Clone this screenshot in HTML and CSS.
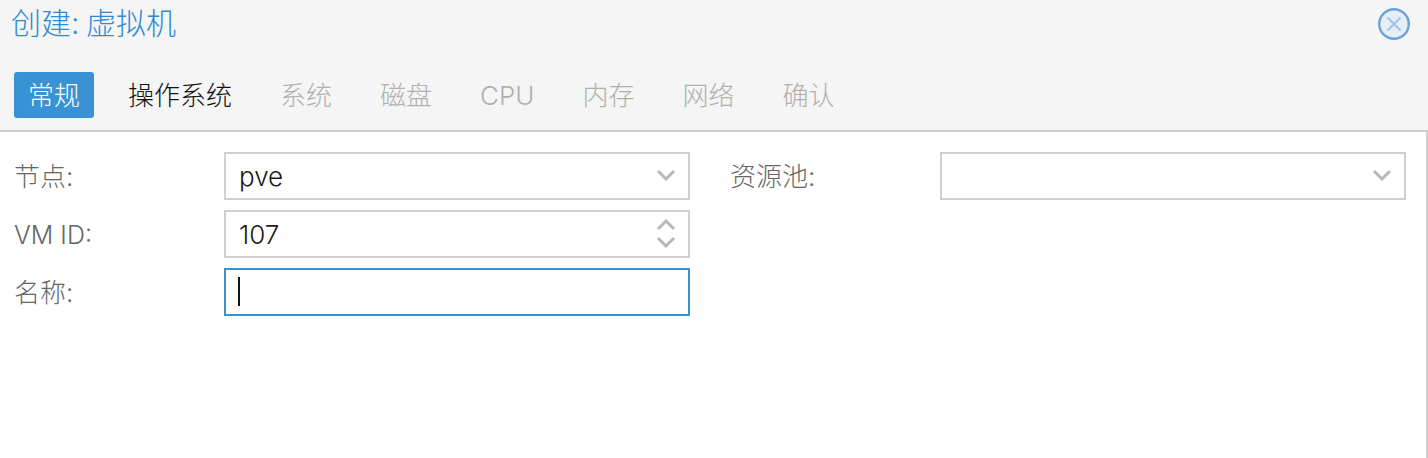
FILE: index.html
```html
<!DOCTYPE html>
<html lang="zh-CN">
<head>
<meta charset="utf-8">
<title>创建: 虚拟机</title>
<link rel="stylesheet" href="styles.css">
</head>
<body>
<div class="window">
  <header class="head">
    <div class="title-row">
      <h1 class="title">创建: 虚拟机</h1>
      <svg class="close" viewBox="0 0 34 34" width="34" height="34" aria-label="关闭">
        <circle cx="17" cy="17" r="14.8" fill="#e6eef7" stroke="#6ba3d6" stroke-width="2.4"/>
        <path d="M10.5 10.5 23.5 23.5M23.5 10.5 10.5 23.5" fill="none" stroke="#a3c6ea" stroke-width="2.4"/>
      </svg>
    </div>
    <nav class="tabs">
      <span class="tab active">常规</span>
      <span class="tab ready">操作系统</span>
      <span class="tab">系统</span>
      <span class="tab">磁盘</span>
      <span class="tab">CPU</span>
      <span class="tab">内存</span>
      <span class="tab">网络</span>
      <span class="tab">确认</span>
    </nav>
  </header>
  <main class="panel">
    <div class="col">
      <div class="row">
        <span class="label">节点:</span>
        <div class="field"><span class="value">pve</span>
          <svg class="chev chev-select" viewBox="0 0 20 12" width="20" height="12"><path d="M2 2 10 10 18 2"/></svg>
        </div>
      </div>
      <div class="row">
        <span class="label label-latin">VM ID:</span>
        <div class="field"><span class="value">107</span>
          <span class="spin">
            <svg class="chev" viewBox="0 0 20 12" width="20" height="12"><path d="M2 10 10 2 18 10"/></svg>
            <svg class="chev" viewBox="0 0 20 12" width="20" height="12"><path d="M2 2 10 10 18 2"/></svg>
          </span>
        </div>
      </div>
      <div class="row">
        <span class="label">名称:</span>
        <div class="field focus"><span class="caret"></span></div>
      </div>
    </div>
    <div class="col">
      <div class="row">
        <span class="label">资源池:</span>
        <div class="field"><span class="value"></span>
          <svg class="chev chev-select" viewBox="0 0 20 12" width="20" height="12"><path d="M2 2 10 10 18 2"/></svg>
        </div>
      </div>
    </div>
  </main>
</div>
</body>
</html>
```
FILE: styles.css
```css
* { box-sizing: border-box; }
html, body { margin: 0; height: 100%; }
body {
  background: #fff;
  overflow: hidden;
  font-family: Inter, "Noto Sans CJK SC", sans-serif;
  font-weight: 300;
}
.window { height: 458px; display: flex; flex-direction: column; }
.head {
  height: 132px;
  background: #f5f5f5;
  border-bottom: 2px solid #cfcfcf;
  padding: 7px 17px 0 0;
  flex: none;
}
.title-row { display: flex; align-items: center; justify-content: space-between; height: 34px; padding-left: 11px; }
.title { margin: -2px 0 0; font-size: 30px; font-weight: 300; color: #2f8ad4; line-height: 34px; word-spacing: -2px; }
.close { display: block; }
.tabs { display: flex; gap: 20px; margin: 31px 0 0 14px; }
.tab {
  height: 46px;
  line-height: 48px;
  padding: 0 14px;
  font-size: 26px;
  font-weight: 300;
  color: #b0b0b0;
  border-radius: 3px;
  white-space: nowrap;
}
.tab.active { background: #3892d4; color: #fff; }
.tab.ready { color: #111; }
.panel {
  flex: 1;
  display: flex;
  border-right: 2px solid #cfcfcf;
  padding: 20px 20px 0 14px;
  gap: 40px;
}
.col { width: 676px; display: flex; flex-direction: column; gap: 10px; }
.row { display: flex; align-items: center; height: 48px; }
.label {
  width: 210px;
  flex: none;
  padding-bottom: 3px;
  font-size: 26px;
  font-weight: 300;
  color: #666;
}
.label-latin { font-size: 25px; padding: 2px 0 0; }
.field {
  flex: 1;
  height: 48px;
  border: 2px solid #cfcfcf;
  background: #fff;
  display: flex;
  align-items: center;
  justify-content: space-between;
  padding: 0 12px 0 13px;
  font-size: 26px;
  color: #1a1a1a;
}
.field.focus { border-color: #3892d4; }
.caret { width: 2px; height: 29px; background: #111; margin: -1px 0 0 -1px; }
.chev { display: block; }
.chev-select { margin-top: -2px; }
.chev path { fill: none; stroke: #b8b8b8; stroke-width: 3; }
.spin { display: flex; flex-direction: column; gap: 5px; margin-top: -2px; }
```
